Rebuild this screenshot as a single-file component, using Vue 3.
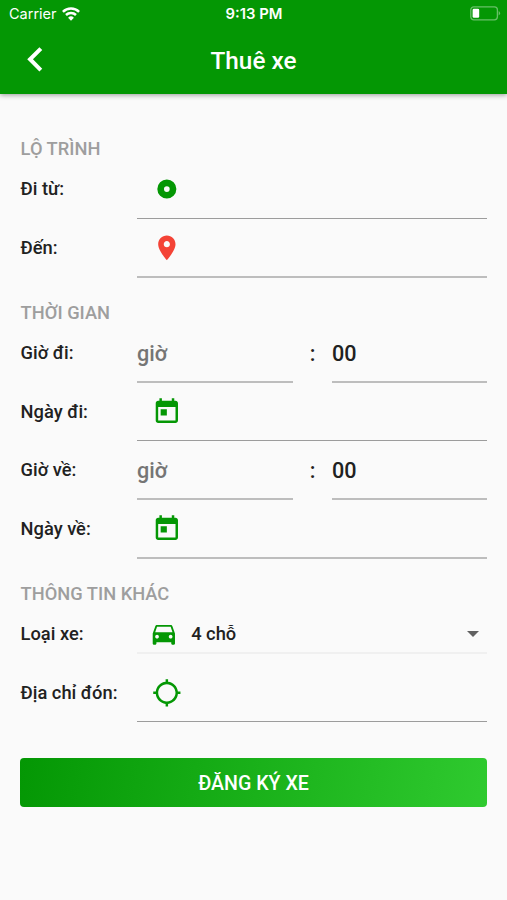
<script setup>
const icons = {
  pin: 'M12 2C8.13 2 5 5.13 5 9c0 5.25 7 13 7 13s7-7.75 7-13c0-3.87-3.13-7-7-7zm0 9.5c-1.38 0-2.5-1.12-2.5-2.5s1.12-2.5 2.5-2.5 2.5 1.12 2.5 2.5-1.12 2.5-2.5 2.5z',
  origin: 'M12 4.5a7.7 7.7 0 1 0 0 15.4 7.7 7.7 0 0 0 0-15.4zm0 5.4a2.3 2.3 0 1 1 0 4.6 2.3 2.3 0 0 1 0-4.6z',
  calendar: 'M19 3h-1V1h-2v2H8V1H6v2H5c-1.11 0-1.99.9-1.99 2L3 19c0 1.1.89 2 2 2h14c1.1 0 2-.9 2-2V5c0-1.1-.9-2-2-2zm0 16H5V8h14v11zM7 10h5v5H7z',
  car: 'M18.92 5.01C18.72 4.42 18.16 4 17.5 4h-11c-.66 0-1.21.42-1.42 1.01L3 11v8c0 .55.45 1 1 1h1c.55 0 1-.45 1-1v-1h12v1c0 .55.45 1 1 1h1c.55 0 1-.45 1-1v-8l-2.08-5.99zM6.5 15c-.83 0-1.5-.67-1.5-1.5S5.67 12 6.5 12s1.5.67 1.5 1.5S7.33 15 6.5 15zm11 0c-.83 0-1.5-.67-1.5-1.5s.67-1.5 1.5-1.5 1.5.67 1.5 1.5-.67 1.5-1.5 1.5zM5 10l1.5-4.5h11L19 10H5z',
  locate: 'M20.94 11c-.46-4.17-3.77-7.48-7.94-7.94V1h-2v2.06C6.83 3.52 3.52 6.83 3.06 11H1v2h2.06c.46 4.17 3.77 7.48 7.94 7.94V23h2v-2.06c4.17-.46 7.48-3.77 7.94-7.94H23v-2h-2.06zM12 19c-3.87 0-7-3.13-7-7s3.13-7 7-7 7 3.13 7 7-3.13 7-7 7z',
}

const sections = [
  {
    title: 'LỘ TRÌNH',
    rows: [
      { label: 'Đi từ:', icon: 'origin' },
      { label: 'Đến:', icon: 'pin', line: 'soft' },
    ],
  },
  {
    title: 'THỜI GIAN',
    rows: [
      { label: 'Giờ đi:', time: true, line: 'soft' },
      { label: 'Ngày đi:', icon: 'calendar', compact: true },
      { label: 'Giờ về:', time: true, line: 'soft' },
      { label: 'Ngày về:', icon: 'calendar', line: 'soft' },
    ],
  },
  {
    title: 'THÔNG TIN KHÁC',
    rows: [
      { label: 'Loại xe:', icon: 'car', value: '4 chỗ', select: true },
      { label: 'Địa chỉ đón:', icon: 'locate', compact: true },
    ],
  },
]
</script>

<template>
  <div class="screen">
    <header class="header">
      <div class="status">
        <div class="carrier">
          <span>Carrier</span>
          <svg class="wifi" viewBox="0 0 18 14">
            <g fill="none" stroke="#fff" stroke-width="2.5">
              <path d="M0.9 4.9a11.5 11.5 0 0 1 16.2 0" />
              <path d="M4 8a7.1 7.1 0 0 1 10 0" />
            </g>
            <path d="M9 13.8 6.1 10.7a4.1 4.1 0 0 1 5.8 0z" fill="#fff" />
          </svg>
        </div>
        <div class="clock">9:13 PM</div>
        <div class="power">
          <svg class="battery" viewBox="0 0 31 15">
            <rect x="0.8" y="0.8" width="26.6" height="13" rx="3" fill="none" stroke="#fff" stroke-opacity=".4" stroke-width="1.3" />
            <path d="M28.7 5a2.6 2.6 0 0 1 0 4.6z" fill="#fff" fill-opacity=".4" />
            <rect x="2.6" y="2.8" width="6.6" height="9" rx="1.3" fill="#fff" />
          </svg>
        </div>
      </div>
      <nav class="bar">
        <svg class="back" viewBox="0 0 24 24"><path d="M15.41 7.41 14 6l-6 6 6 6 1.41-1.41L10.83 12z" /></svg>
        <h1>Thuê xe</h1>
        <span></span>
      </nav>
    </header>

    <main class="form">
      <section v-for="s in sections" :key="s.title" class="section">
        <h2>{{ s.title }}</h2>
        <div v-for="r in s.rows" :key="r.label" class="row" :class="{ compact: r.compact }">
          <label>{{ r.label }}</label>
          <div v-if="r.time" class="time">
            <div class="field hint" :class="r.line">giờ</div>
            <span class="colon">:</span>
            <div class="field" :class="r.line">00</div>
          </div>
          <div v-else class="field" :class="[r.line, { select: r.select }]">
            <svg class="icon" :class="r.icon" viewBox="0 0 24 24"><path :d="icons[r.icon]" /></svg>
            <span v-if="r.value" class="value">{{ r.value }}</span>
            <svg v-if="r.select" class="caret" viewBox="0 0 12 6"><path d="M0 0h12L6 6z" /></svg>
          </div>
        </div>
      </section>
      <button class="submit" type="button">ĐĂNG KÝ XE</button>
    </main>
  </div>
</template>

<style>
body {
  background: #fafafa;
}
</style>

<style scoped>
.screen {
  height: 900px;
  overflow: hidden;
  background: #fafafa;
  color: #212121;
  font-family: Roboto, "Noto Sans", sans-serif;
  font-weight: 500;
}
.header {
  height: 94px;
  background: #049704;
  color: #fff;
  box-shadow: 0 1px 5px rgba(0, 0, 0, 0.4);
}
.status {
  display: grid;
  grid-template-columns: 1fr auto 1fr;
  align-items: center;
  height: 27px;
  padding: 0 6px 0 9px;
  font-family: Inter, sans-serif;
  font-size: 14.5px;
}
.carrier {
  display: flex;
  align-items: center;
  gap: 5px;
  font-weight: 400;
}
.wifi {
  width: 18px;
  height: 14px;
}
.clock {
  padding-right: 2px;
  font-size: 14.8px;
  font-weight: 600;
}
.power {
  display: flex;
  justify-content: flex-end;
}
.battery {
  width: 31px;
  height: 15px;
}
.bar {
  display: grid;
  grid-template-columns: 1fr auto 1fr;
  align-items: center;
  height: 66px;
  padding: 0 11px;
}
.back {
  width: 48.7px;
  height: 48.7px;
  margin-top: -1px;
  fill: #fff;
}
h1 {
  margin: 0;
  padding-top: 2px;
  font-size: 24.3px;
  font-weight: 500;
  line-height: 30px;
}
.form {
  padding: 42px 20px 0 20px;
}
.section {
  padding-bottom: 22px;
}
.section:last-of-type {
  padding-bottom: 36px;
}
h2 {
  margin: 0;
  padding-left: 0.6px;
  height: 24px;
  font-size: 18.3px;
  line-height: 25px;
  font-weight: 500;
  color: #9e9e9e;
}
.row {
  display: grid;
  grid-template-columns: 117px 350px;
  grid-template-rows: 100%;
  height: 59px;
}
.compact {
  height: 58px;
}
.row label {
  padding-left: 0.6px;
  font-size: 18.3px;
  line-height: 57px;
}
.field {
  display: flex;
  align-items: center;
  box-sizing: border-box;
  height: 100%;
  border-bottom: 1px solid #9c9c9c;
  font-size: 21.6px;
}
.soft {
  border-bottom: 2px solid #bdbdbd;
}
.time {
  display: grid;
  grid-template-columns: 156px 39px 155px;
}
.time .field {
  padding-top: 1px;
}
.colon {
  align-self: center;
  text-align: center;
  font-size: 21.6px;
}
.hint {
  color: #757575;
}
.icon {
  width: 29.7px;
  height: 29.7px;
  margin-left: 14.6px;
  fill: #049704;
}
.pin {
  fill: #f44336;
}
.car {
  margin-top: 1px;
  margin-left: 12px;
}
.field.select {
  height: 49px;
  padding-top: 11px;
  border-bottom: 2px solid #f0f0f0;
}
.value {
  flex: 1;
  margin-left: 12.5px;
  font-size: 18.3px;
  line-height: 24px;
}
.caret {
  width: 12px;
  height: 6px;
  margin-right: 8.5px;
  fill: #616161;
}
.submit {
  display: block;
  width: 467px;
  height: 49px;
  padding: 2px 0 0;
  border: 0;
  border-radius: 4px;
  background: linear-gradient(100deg, #049704, #2fca2f);
  color: #fff;
  font-family: inherit;
  font-size: 19.6px;
  font-weight: 500;
}
</style>
